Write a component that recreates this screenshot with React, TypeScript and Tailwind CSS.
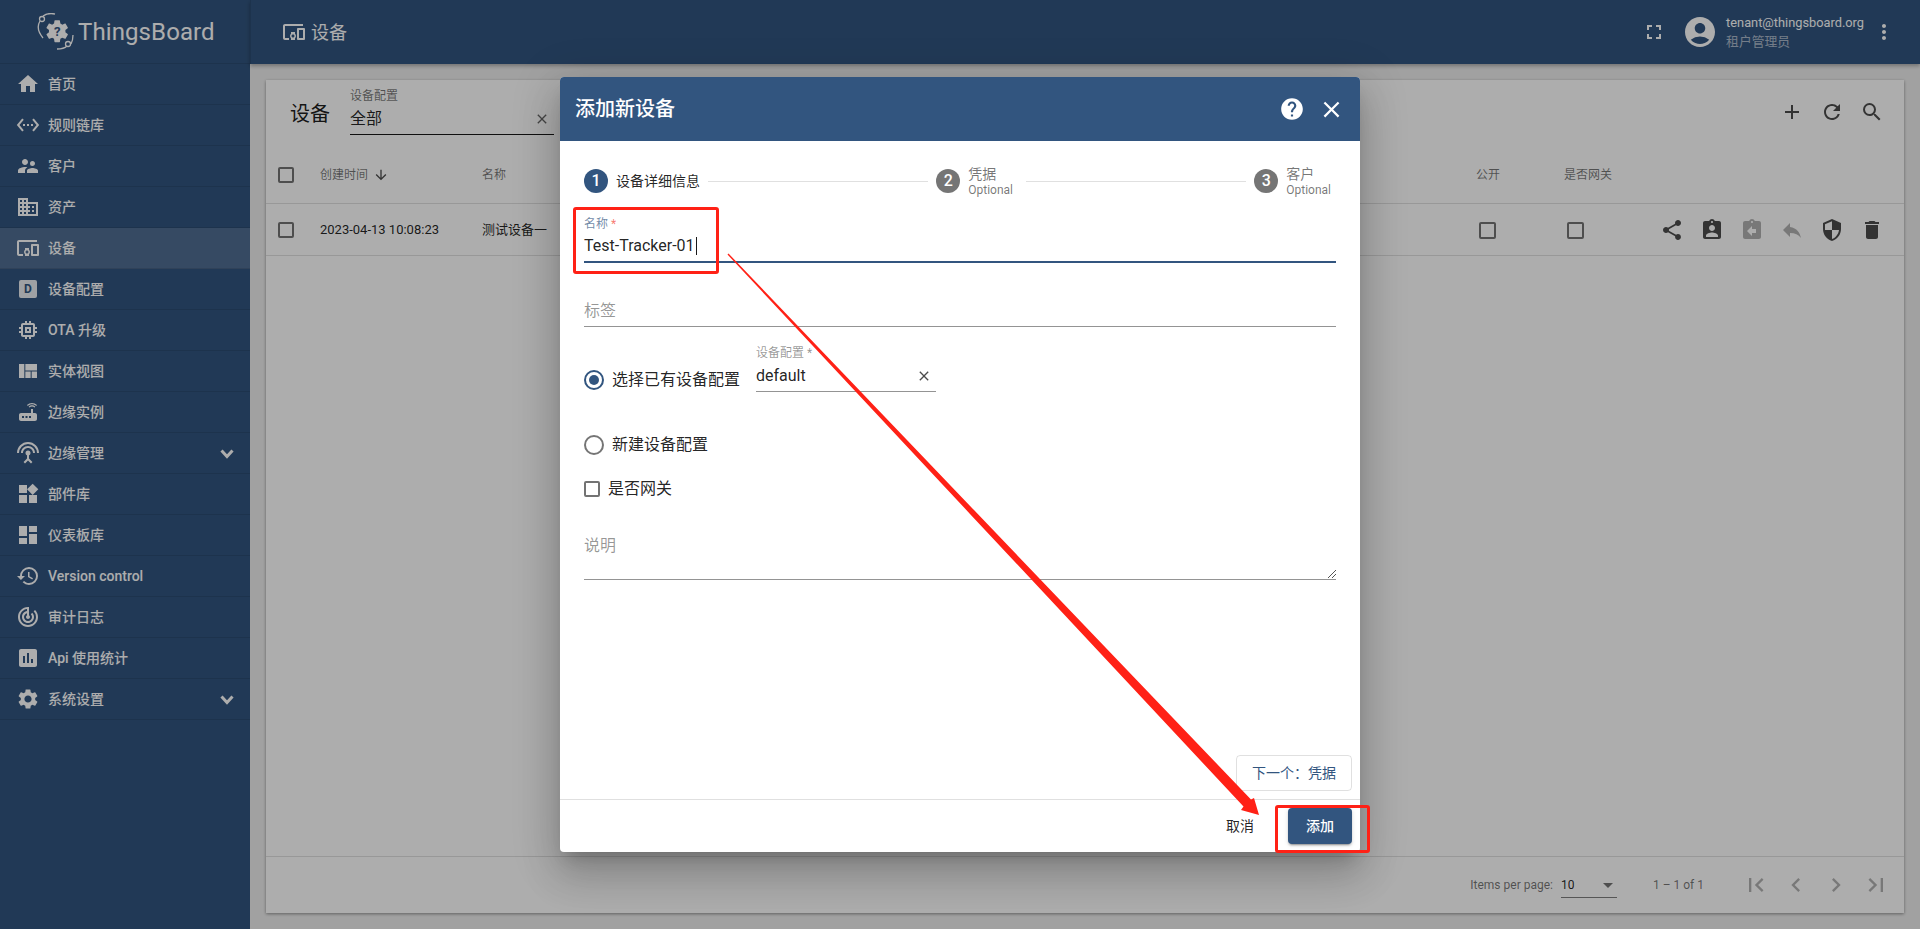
import React from "react";
import {
  MdHome, MdSettingsEthernet, MdSupervisorAccount, MdDomain, MdDevicesOther, MdMemory, MdViewQuilt, MdRouter,
  MdSettingsInputAntenna, MdWidgets, MdDashboard, MdHistory, MdTrackChanges, MdInsertChart, MdSettings,
  MdFullscreen, MdAccountCircle, MdMoreVert, MdAdd, MdRefresh, MdSearch, MdClose, MdArrowDownward, MdShare,
  MdAssignmentInd, MdAssignmentReturn, MdReply, MdSecurity, MdDelete, MdFirstPage, MdChevronLeft, MdChevronRight,
  MdLastPage, MdHelp, MdArrowDropDown,
} from "react-icons/md";

const font = { fontFamily: '"Roboto","Noto Sans CJK SC",sans-serif' };

function DeviceProfileIcon() {
  return (
    <div className="w-[18px] h-[18px] ml-[3px] rounded-[2px] bg-white/90 flex items-center justify-center text-[12px] font-bold text-[#32557f]">
      D
    </div>
  );
}

const navItems: { label: React.ReactNode; icon: React.ReactNode; active?: boolean; more?: boolean }[] = [
  { label: "首页", icon: <MdHome size={24} /> },
  { label: "规则链库", icon: <MdSettingsEthernet size={24} /> },
  { label: "客户", icon: <MdSupervisorAccount size={24} /> },
  { label: "资产", icon: <MdDomain size={24} /> },
  { label: "设备", icon: <MdDevicesOther size={24} />, active: true },
  { label: "设备配置", icon: <DeviceProfileIcon /> },
  { label: "OTA 升级", icon: <MdMemory size={24} /> },
  { label: "实体视图", icon: <MdViewQuilt size={24} /> },
  { label: "边缘实例", icon: <MdRouter size={24} /> },
  { label: "边缘管理", icon: <MdSettingsInputAntenna size={24} />, more: true },
  { label: "部件库", icon: <MdWidgets size={24} /> },
  { label: "仪表板库", icon: <MdDashboard size={24} /> },
  { label: "Version control", icon: <MdHistory size={24} /> },
  { label: "审计日志", icon: <MdTrackChanges size={24} /> },
  { label: "Api 使用统计", icon: <MdInsertChart size={24} /> },
  { label: "系统设置", icon: <MdSettings size={24} />, more: true },
];

function Logo() {
  return (
    <svg width="38" height="38" viewBox="0 0 38 38" className="shrink-0">
      <g fill="none" stroke="#fff" strokeWidth="1.3">
        <path d="M3 8 C0 13 1 19 6 25" />
        <path d="M6 3 C9 1 14 0 18 1" />
        <circle cx="5" cy="6" r="2.5" />
        <path d="M34 31 C35 29 36 26 36 22" />
        <path d="M20 36 C25 36 28 35 30 33" />
        <circle cx="31" cy="31" r="2.5" />
      </g>
      <g transform="translate(7,5) scale(1.1)">
        <path
          fill="#fff"
          d="M19.43 12.98c.04-.32.07-.64.07-.98s-.03-.66-.07-.98l2.11-1.65c.19-.15.24-.42.12-.64l-2-3.46c-.12-.22-.39-.3-.61-.22l-2.49 1c-.52-.4-1.08-.73-1.69-.98l-.38-2.65C14.46 2.18 14.25 2 14 2h-4c-.25 0-.46.18-.49.42l-.38 2.65c-.61.25-1.17.59-1.69.98l-2.49-1c-.23-.09-.49 0-.61.22l-2 3.46c-.13.22-.07.49.12.64l2.11 1.65c-.04.32-.07.65-.07.98s.03.66.07.98l-2.11 1.65c-.19.15-.24.42-.12.64l2 3.46c.12.22.39.3.61.22l2.49-1c.52.4 1.08.73 1.69.98l.38 2.65c.03.24.24.42.49.42h4c.25 0 .46-.18.49-.42l.38-2.65c.61-.25 1.17-.59 1.69-.98l2.49 1c.23.09.49 0 .61-.22l2-3.46c.12-.22.07-.49-.12-.64l-2.11-1.65z"
        />
        <text x="12" y="16.5" textAnchor="middle" fontSize="12" fontWeight="700" fill="#32557f">?</text>
      </g>
    </svg>
  );
}

function Chevron() {
  return (
    <svg width="14" height="12" viewBox="0 0 14 12" className="ml-auto mt-[2px]">
      <polyline points="1.5,2.5 7,8.5 12.5,2.5" fill="none" stroke="#fff" strokeWidth="3" />
    </svg>
  );
}

function Sidebar() {
  return (
    <aside className="w-[250px] shrink-0 h-full bg-[#32557f] text-white flex flex-col">
      <div className="h-[64px] shrink-0 flex items-center pl-[37px] gap-[3px] border-b border-black/10">
        <Logo />
        <span className="text-[24px] leading-none font-normal tracking-[0.1px]">ThingsBoard</span>
      </div>
      {navItems.map((it, i) => (
        <div
          key={i}
          className={`h-[41px] shrink-0 flex items-center pl-4 pr-[16px] border-b border-black/10 text-[14px] font-medium ${it.active ? "bg-white/15" : ""}`}
        >
          <span className="w-[24px] flex items-center">{it.icon}</span>
          <span className="ml-2">{it.label}</span>
          {it.more && <Chevron />}
        </div>
      ))}
    </aside>
  );
}

function TopBar() {
  return (
    <header className="h-[64px] shrink-0 bg-[#32557f] text-white flex items-center shadow-[0_2px_4px_rgba(0,0,0,0.3)] border-l border-black/10">
      <MdDevicesOther size={24} className="ml-[31px]" />
      <span className="ml-[5px] text-[18px]">设备</span>
      <div className="ml-auto flex items-center">
        <MdFullscreen size={24} />
        <MdAccountCircle size={36} className="ml-[16px]" />
        <div className="ml-[8px] text-[12.8px] leading-[19px]">
          <div>tenant@thingsboard.org</div>
          <div className="text-white/60">租户管理员</div>
        </div>
        <MdMoreVert size={24} className="ml-[8px] mr-[24px]" />
      </div>
    </header>
  );
}

function Box({ className = "" }: { className?: string }) {
  return <div className={`border-2 border-black/55 rounded-[2px] shrink-0 ${className}`} />;
}

function Card() {
  return (
    <section className="flex-1 bg-white flex flex-col shadow-[0_1px_3px_rgba(0,0,0,0.4)]">
      <div className="h-[67px] shrink-0 flex items-start pl-6 pr-5 pt-2">
        <span className="text-[20px] leading-[28px] mt-[12px] text-black/90">设备</span>
        <div className="ml-5 w-[204px] border-b border-black/90 h-[47px]">
          <div className="text-[12px] leading-4 text-black/55">设备配置</div>
          <div className="flex items-center justify-between text-[16px] leading-[20px] mt-[5px] pr-[4px] text-black/87">
            <span>全部</span>
            <MdClose size={16} className="text-black/60" />
          </div>
        </div>
        <div className="ml-auto flex gap-4 text-black/70 mt-[12px]">
          <MdAdd size={24} />
          <MdRefresh size={24} />
          <MdSearch size={24} />
        </div>
      </div>
      <div className="h-[57px] shrink-0 flex items-center border-b border-black/12 pl-3 pr-5 text-[12px] text-black/55">
        <div className="w-[42px]"><Box className="w-4 h-4" /></div>
        <div className="w-[162px] flex items-center gap-[5px]">
          <span>创建时间</span>
          <MdArrowDownward size={16} className="text-black/70" />
        </div>
        <span>名称</span>
        <div className="flex-1" />
        <div className="w-[88px]">公开</div>
        <div className="w-[320px]">是否网关</div>
      </div>
      <div className="h-[52px] shrink-0 flex items-center border-b border-black/12 pl-3 pr-5 pt-px text-[13px] text-black/87">
        <div className="w-[42px]"><Box className="w-4 h-4" /></div>
        <div className="w-[162px]">2023-04-13 10:08:23</div>
        <span>测试设备一</span>
        <div className="flex-1" />
        <div className="w-[88px] pl-[3px]"><Box className="w-[17px] h-[17px]" /></div>
        <div className="w-[96px] pl-[3px]"><Box className="w-[17px] h-[17px]" /></div>
        <div className="flex gap-4 text-black/70">
          <MdShare size={24} />
          <MdAssignmentInd size={24} />
          <MdAssignmentReturn size={24} className="text-black/30" />
          <MdReply size={24} className="text-black/30" />
          <MdSecurity size={24} />
          <MdDelete size={24} />
        </div>
      </div>
      <div className="flex-1" />
      <div className="h-[57px] shrink-0 border-t border-black/12 flex items-center justify-end pr-[14px] text-[12px] text-black/55">
        <span>Items per page:</span>
        <div className="ml-2 w-[56px] h-[24px] mt-[1px] border-b border-black/50 flex items-center justify-between text-black/87">
          <span>10</span>
          <MdArrowDropDown size={24} className="text-black/55 -mr-[3px]" />
        </div>
        <span className="ml-9">1 – 1 of 1</span>
        <div className="ml-[38px] flex gap-3 text-black/30">
          <MdFirstPage size={28} />
          <MdChevronLeft size={28} />
          <MdChevronRight size={28} />
          <MdLastPage size={28} />
        </div>
      </div>
    </section>
  );
}

function StepCircle({ n, on }: { n: number; on?: boolean }) {
  return (
    <span className={`w-6 h-6 rounded-full shrink-0 flex items-center justify-center text-white text-[16px] font-medium ${on ? "bg-[#32557f]" : "bg-black/54"}`}>
      {n}
    </span>
  );
}

function StepLabel({ title }: { title: string }) {
  return (
    <div className="ml-2 text-black/54 translate-y-px">
      <div className="text-[14px] leading-4">{title}</div>
      <div className="text-[12px] leading-4">Optional</div>
    </div>
  );
}

function Dialog() {
  return (
    <div className="absolute left-[560px] top-[77px] w-[800px] h-[775px] bg-white rounded-[4px] overflow-hidden flex flex-col shadow-[0_11px_15px_-7px_rgba(0,0,0,0.2),0_24px_38px_3px_rgba(0,0,0,0.14),0_9px_46px_8px_rgba(0,0,0,0.12)]">
      <div className="h-[64px] shrink-0 bg-[#32557f] text-white flex items-center pl-[15px] pr-[15px]">
        <span className="text-[20px] font-medium">添加新设备</span>
        <MdHelp size={26} className="ml-auto" />
        <MdClose size={27} className="ml-[13px]" />
      </div>

      <div className="flex-1 min-h-0 flex flex-col">
        <div className="flex items-center pl-6 pr-[29px] pt-[24px]">
          <StepCircle n={1} on />
          <span className="ml-2 text-[14px] text-black/87">设备详细信息</span>
          <div className="flex-1 h-px bg-[#e0e0e0] mx-2" />
          <StepCircle n={2} />
          <StepLabel title="凭据" />
          <div className="flex-1 h-px bg-[#e0e0e0] ml-[13px] mr-2" />
          <StepCircle n={3} />
          <StepLabel title="客户" />
        </div>

        <div className="px-6 flex-1 flex flex-col">
          <div className="mt-[19px] border-b-2 border-[#32557f] pb-[5px]">
            <div className="text-[12px] leading-4 text-[#32557f]/70">
              名称 <span className="text-[#f44336]/70">*</span>
            </div>
            <div className="text-[16px] leading-[20px] mt-1 text-black/87 flex items-center">
              Test-Tracker-01<span className="inline-block w-px h-[18px] bg-black/90 ml-px" />
            </div>
          </div>

          <div className="mt-[38px] border-b border-black/42 pb-[5px] text-[16px] leading-[20px] text-black/42">标签</div>

          <div className="mt-[18px] flex items-start">
            <div className="w-[172px] pt-[25px] flex items-center gap-2">
              <span className="w-5 h-5 rounded-full border-2 border-[#32557f] flex items-center justify-center">
                <span className="w-[10px] h-[10px] rounded-full bg-[#32557f]" />
              </span>
              <span className="text-[16px] leading-[20px] text-black/87">选择已有设备配置</span>
            </div>
            <div className="w-[180px] h-[47px] border-b border-black/42">
              <div className="text-[12px] leading-4 text-black/42">设备配置 *</div>
              <div className="mt-[5px] text-[16px] leading-[20px] text-black/87 flex items-center justify-between pr-[4px]">
                <span>default</span>
                <MdClose size={16} className="text-black/70" />
              </div>
            </div>
          </div>

          <div className="mt-[43px] flex items-center gap-2">
            <span className="w-5 h-5 rounded-full border-2 border-black/54" />
            <span className="text-[16px] leading-[20px] text-black/87">新建设备配置</span>
          </div>

          <div className="mt-[26px] flex items-center gap-2">
            <Box className="w-4 h-4" />
            <span className="text-[16px] leading-4 text-black/87">是否网关</span>
          </div>

          <div className="relative mt-[39px] h-[44px] border-b border-black/42 text-[16px] leading-[20px] text-black/42">
            说明
            <svg width="8" height="8" viewBox="0 0 8 8" className="absolute right-0 bottom-[1px]">
              <path d="M8 0 L0 8 M8 4 L4 8" stroke="#555" strokeWidth="1" fill="none" />
            </svg>
          </div>

          <div className="flex-1" />
          <div className="flex justify-end -mr-4 pb-2">
            <div className="w-[116px] h-[36px] rounded-[4px] border border-black/12 flex items-center justify-center text-[14px] text-[#32557f]">
              下一个：凭据
            </div>
          </div>
        </div>
      </div>

      <div className="h-[53px] shrink-0 border-t border-black/12 flex items-start justify-end pt-2 pr-2">
        <span className="h-9 flex items-center mr-[34px] text-[14px] text-black/87">取消</span>
        <div className="w-[64px] h-9 rounded-[4px] bg-[#32557f] text-white text-[14px] font-medium flex items-center justify-center shadow-[0_3px_1px_-2px_rgba(0,0,0,0.2),0_2px_2px_rgba(0,0,0,0.14),0_1px_5px_rgba(0,0,0,0.12)]">
          添加
        </div>
      </div>
    </div>
  );
}

function Annotations() {
  return (
    <svg width="1920" height="929" viewBox="0 0 1920 929" className="absolute inset-0 pointer-events-none">
      <rect x="574.5" y="208.5" width="143" height="64" rx="1.5" fill="none" stroke="#ff2116" strokeWidth="3" />
      <rect x="1276.5" y="806.5" width="92" height="45" rx="1.5" fill="none" stroke="#ff2116" strokeWidth="3" />
      <polygon
        fill="#ff2116"
        points="728.5,253.5 853.9,384.6 974,510.1 1251,799.5 1254,798 1259,815 1241,810 1243.5,806.5 970,513.9 851.3,387 727.5,254.5"
      />
    </svg>
  );
}

export default function App() {
  return (
    <div className="relative w-[1920px] h-[929px] overflow-hidden flex bg-[#eeeeee]" style={font}>
      <Sidebar />
      <div className="flex-1 min-w-0 flex flex-col">
        <TopBar />
        <main className="flex-1 min-h-0 p-4 flex">
          <Card />
        </main>
      </div>
      <div className="absolute inset-0 bg-black/32" />
      <Dialog />
      <Annotations />
    </div>
  );
}
